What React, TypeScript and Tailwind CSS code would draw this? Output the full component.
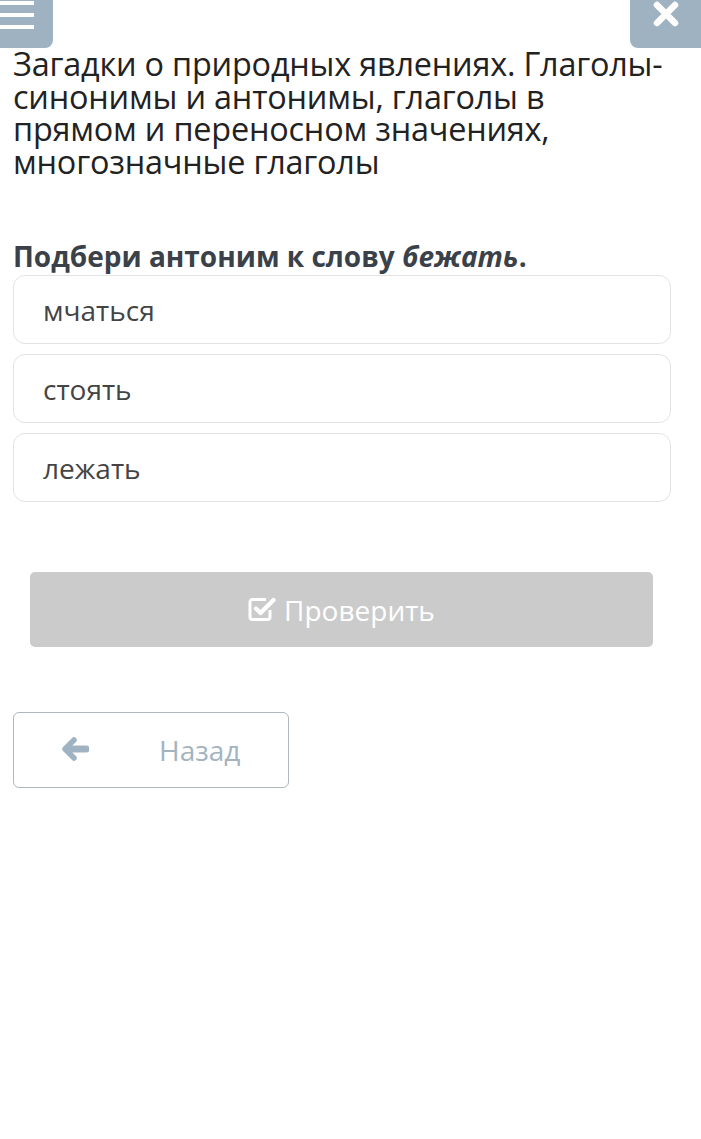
import React from "react";

function CheckSquare() {
  return (
    <svg width="29" height="28" viewBox="0 0 29 28" fill="none">
      <path d="M22 16V23a2.5 2.5 0 0 1-2.5 2.5H4.5A2.5 2.5 0 0 1 2 23V8a2.5 2.5 0 0 1 2.5-2.5H18" stroke="white" strokeWidth="3" strokeLinejoin="round" />
      <path d="M8 14.5L12.5 19L25.5 6" stroke="white" strokeWidth="4.3" strokeLinecap="round" strokeLinejoin="round" />
    </svg>
  );
}

function ArrowLeft() {
  return (
    <svg width="27" height="24" viewBox="0 0 27 24" fill="none">
      <path d="M12 3L3 12L12 21" stroke="#9fb3c2" strokeWidth="5.5" strokeLinecap="round" strokeLinejoin="round" />
      <path d="M5 12H24" stroke="#9fb3c2" strokeWidth="7" strokeLinecap="round" />
    </svg>
  );
}

function Cross() {
  return (
    <svg width="28" height="28" viewBox="0 0 28 28" fill="none">
      <path d="M5 5L23 23M23 5L5 23" stroke="white" strokeWidth="6.5" strokeLinecap="round" />
    </svg>
  );
}

export default function App() {
  const options = ["мчаться", "стоять", "лежать"];
  return (
    <div className="relative w-[701px] h-[1139px] bg-white overflow-hidden" style={{ fontFamily: '"Open Sans", "Noto Sans", sans-serif' }}>
      <div className="flex justify-between h-[48px]">
        <div className="w-[53px] h-[48px] bg-[#9fb2c1] rounded-br-[8px] flex flex-col gap-[8px] pt-[1px]">
          <div className="w-[34px] h-[4px] bg-white" />
          <div className="w-[34px] h-[4px] bg-white" />
          <div className="w-[34px] h-[4px] bg-white" />
        </div>
        <div className="w-[71px] h-[48px] bg-[#9fb2c1] rounded-bl-[8px] flex justify-center">
          <div className="ml-[1px]"><Cross /></div>
        </div>
      </div>

      <div className="px-[13px]">
        <h1 className="text-[32.4px] leading-[32.5px] text-[#222] font-normal -mt-[1px] tracking-[-0.2px]">
          Загадки о природных явлениях. Глаголы-<br />синонимы и антонимы, глаголы в<br />прямом и переносном значениях,<br />многозначные глаголы
        </h1>

        <p className="mt-[62px] text-[28px] leading-[34px] font-bold text-[#3b4148]">
          Подбери антоним к слову <i>бежать</i>.
        </p>

        <div className="mt-[2px] w-[658px] flex flex-col gap-[10px]">
          {options.map((o) => (
            <div key={o} className="h-[69px] border border-[#e3e3e3] rounded-[12px] flex items-center px-[29px] text-[28px] text-[#444]">
              {o}
            </div>
          ))}
        </div>

        <div className="mt-[70px] ml-[17px] w-[623px] h-[75px] rounded-[5px] bg-[#cbcbcb] flex items-center justify-center gap-[7px] text-white text-[28px]">
          <div className="-mt-[4px]"><CheckSquare /></div>
          <span>Проверить</span>
        </div>

        <div className="mt-[65px] w-[276px] h-[76px] border border-[#b0b8be] rounded-[6px] flex items-center text-[#a3b3bf] text-[28px]">
          <div className="ml-[48px] -mt-[2px]"><ArrowLeft /></div>
          <span className="ml-[70px]">Назад</span>
        </div>
      </div>
    </div>
  );
}
